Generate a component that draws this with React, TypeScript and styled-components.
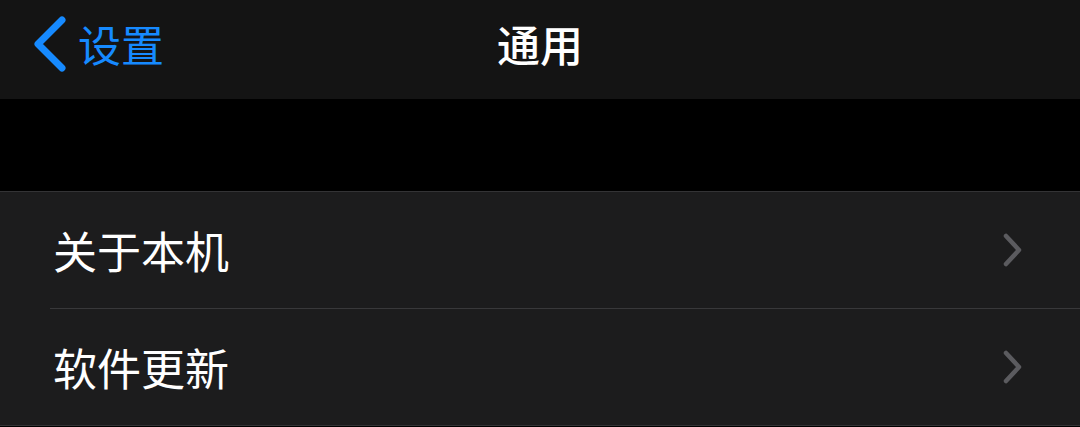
import styled, { createGlobalStyle } from "styled-components";

const GlobalStyle = createGlobalStyle`
  html, body {
    margin: 0;
    padding: 0;
    background: #000;
  }
  body {
    font-family: "Noto Sans CJK SC", "Noto Sans", sans-serif;
    -webkit-font-smoothing: antialiased;
  }
`;

const items = ["关于本机", "软件更新"];

const BackChevron = () => (
  <svg width="36" height="58" viewBox="0 0 36 58">
    <path
      d="M30 5 L6 29 L30 53"
      fill="none"
      stroke="#168aff"
      strokeWidth="7"
      strokeLinecap="round"
      strokeLinejoin="round"
    />
  </svg>
);

const RowChevron = () => (
  <svg width="22" height="36" viewBox="0 0 22 36">
    <path
      d="M4 4 L17 18 L4 32"
      fill="none"
      stroke="#5b5b5f"
      strokeWidth="4.5"
      strokeLinecap="round"
      strokeLinejoin="round"
    />
  </svg>
);

export default function App() {
  return (
    <Screen>
      <GlobalStyle />
      <NavBar>
        <BackButton>
          <BackChevron />
          <BackLabel>设置</BackLabel>
        </BackButton>
        <Title>通用</Title>
        <span />
      </NavBar>
      <Spacer />
      <Group>
        {items.map((label, i) => (
          <Row key={label}>
            <RowInner $last={i === items.length - 1}>
              <RowLabel>{label}</RowLabel>
              <RowChevron />
            </RowInner>
          </Row>
        ))}
      </Group>
    </Screen>
  );
}

const Screen = styled.div`
  width: 1080px;
  height: 427px;
  background: #000;
  overflow: hidden;
`;

const NavBar = styled.div`
  height: 99px;
  background: #141414;
  display: grid;
  grid-template-columns: 1fr auto 1fr;
  align-items: center;
`;

const BackButton = styled.div`
  display: flex;
  align-items: center;
  gap: 10px;
  padding-left: 32px;
  margin-top: -12px;
`;

const BackLabel = styled.span`
  color: #168aff;
  font-size: 43px;
  line-height: 1;
`;

const Title = styled.span`
  color: #fff;
  font-size: 43px;
  font-weight: 500;
  line-height: 1;
  margin-top: -12px;
`;

const Spacer = styled.div`
  height: 92px;
`;

const Group = styled.div`
  background: #1c1c1d;
  border-top: 1px solid #333335;
  border-bottom: 1px solid #333335;
`;

const Row = styled.div`
  padding-left: 50px;
`;

const RowInner = styled.div<{ $last: boolean }>`
  height: 116px;
  display: flex;
  align-items: center;
  justify-content: space-between;
  padding-left: 3px;
  padding-right: 56px;
  border-bottom: ${(p) => (p.$last ? "none" : "1px solid #38383a")};
`;

const RowLabel = styled.span`
  color: #fff;
  font-size: 44px;
  line-height: 1;
`;
